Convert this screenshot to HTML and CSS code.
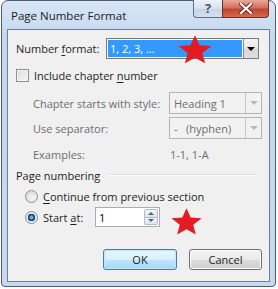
FILE: index.html
```html
<!DOCTYPE html>
<html lang="en">
<head>
  <meta charset="UTF-8">
  <meta name="viewport" content="width=device-width, initial-scale=1.0">
  <title>Page Number Format</title>
  <link rel="stylesheet" href="styles.css">
</head>
<body>
  <div class="window">

    <!-- Title bar -->
    <div class="titlebar">
      <span class="title">Page Number Format</span>
      <div class="caption-btns">
        <div class="cap-btn cap-help">?</div>
        <div class="cap-btn cap-close">
          <svg width="14" height="11" viewBox="0 0 14 11">
            <path d="M2 1 L12 10 M12 1 L2 10" stroke="#5a2a22" stroke-width="4" stroke-linecap="square"/>
            <path d="M2 1 L12 10 M12 1 L2 10" stroke="#ffffff" stroke-width="2.2" stroke-linecap="square"/>
          </svg>
        </div>
      </div>
    </div>

    <!-- Dialog body -->
    <div class="content">
      <div class="row row-format">
        <span class="label">Number <u>f</u>ormat:</span>
        <div class="combo combo-main">
          <span class="combo-value selected">1, 2, 3, …</span>
          <span class="combo-arrow"><i class="tri"></i></span>
        </div>
      </div>

      <div class="row row-check">
        <span class="checkbox"></span>
        <span>Include chapter <u>n</u>umber</span>
      </div>

      <div class="chapter-grid disabled">
        <span class="label">Chapter starts with style:</span>
        <div class="combo combo-off">
          <span class="combo-value">Heading 1</span>
          <span class="combo-arrow"><i class="tri"></i></span>
        </div>
        <span class="label">Use separator:</span>
        <div class="combo combo-off">
          <span class="combo-value">-&nbsp;&nbsp;&nbsp;(hyphen)</span>
          <span class="combo-arrow"><i class="tri"></i></span>
        </div>
        <span class="label">Examples:</span>
        <span class="examples">1-1, 1-A</span>
      </div>

      <div class="row row-group">
        <span>Page numbering</span>
        <span class="group-line"></span>
      </div>

      <div class="row row-radio">
        <span class="radio"></span>
        <span><u>C</u>ontinue from previous section</span>
      </div>

      <div class="row row-radio row-start">
        <span class="radio checked"></span>
        <span class="start-label">Start <u>a</u>t:</span>
        <div class="spin">
          <span class="spin-value">1</span>
          <span class="spin-btns">
            <span class="spin-up"><i class="tri-up"></i></span>
            <span class="spin-down"><i class="tri-down"></i></span>
          </span>
        </div>
      </div>

      <div class="buttons">
        <button class="btn btn-default">OK</button>
        <button class="btn">Cancel</button>
      </div>

      <!-- red markers drawn over the dialog -->
      <svg class="star star-one" viewBox="0 0 100 96" preserveAspectRatio="none">
        <polygon points="50,4 62.7,34.5 95.7,37.2 70.5,58.7 78.2,90.8 50,73.6 21.8,90.8 29.5,58.7 4.3,37.2 37.3,34.5" fill="#e31b23"/>
      </svg>
      <svg class="star star-two" viewBox="0 0 100 96" preserveAspectRatio="none">
        <polygon points="50,4 62.7,34.5 95.7,37.2 70.5,58.7 78.2,90.8 50,73.6 21.8,90.8 29.5,58.7 4.3,37.2 37.3,34.5" fill="#e31b23"/>
      </svg>
    </div>
  </div>
</body>
</html>
```

FILE: styles.css
```css
body {
  margin: 0;
  background: #ffffff;
  font-family: "Open Sans", "Noto Sans", sans-serif;
  font-size: 11px;
  color: #1e1e1e;
  white-space: nowrap;
}

.window {
  margin-left: 1px;
  width: 273px;
  height: 285px;
  border: 1px solid #4d5d73;
  border-radius: 7px 7px 4px 4px;
  background: linear-gradient(#d8e6f6, #c3d7ee 40px, #c6d9ef);
  display: flex;
  flex-direction: column;
}

/* title bar */
.titlebar {
  height: 28px;
  display: flex;
  justify-content: space-between;
  align-items: flex-start;
}

.title {
  margin: 7px 0 0 9px;
  font-size: 11.5px;
  color: #1b1b1b;
}

.caption-btns {
  display: flex;
  margin-right: 6px;
  margin-top: -1px;
}

.cap-btn {
  height: 17px;
  border: 1px solid #5f6f86;
  border-top: none;
  display: flex;
  justify-content: center;
  align-items: center;
}

.cap-help {
  width: 28px;
  border-right: none;
  border-radius: 0 0 0 4px;
  background: linear-gradient(#eef3f9, #d7e1ee 50%, #c5d3e5 51%, #d6e1ee);
  color: #4a5566;
  font-size: 13px;
  font-weight: bold;
  line-height: 1;
}

.cap-close {
  width: 45px;
  border-color: #6e3129;
  border-radius: 0 0 4px 0;
  background: linear-gradient(#e9a899, #d2715f 45%, #c3432e 55%, #d26a4d);
}

/* dialog body */
.content {
  position: relative;
  margin: 0 5px;
  border: 1px solid #6f7f95;
  background: #f0f0f0;
  padding: 8px 7px 0 8px;
  box-sizing: border-box;
  height: 253px;
}

.row {
  display: flex;
  align-items: center;
}

u {
  text-decoration-thickness: 1px;
  text-underline-offset: 2px;
}

.row-format {
  height: 21px;
}

.row-format .label {
  width: 90px;
}

.combo {
  box-sizing: border-box;
  display: flex;
  align-items: stretch;
  border: 1px solid #7a7a7a;
  background: #ffffff;
}

.combo-main {
  width: 153px;
  height: 21px;
  padding: 1px;
}

.combo-value {
  flex: 1;
  display: flex;
  align-items: center;
  padding-left: 3px;
}

.combo-value.selected {
  background: #3399ff;
  color: #ffffff;
  padding-left: 2px;
}

.combo-arrow {
  width: 14px;
  display: flex;
  justify-content: center;
  align-items: center;
  border-left: 1px solid #8a8a8a;
  background: linear-gradient(#f4f4f4, #e6e6e6 50%, #d6d6d6 51%, #dedede);
}

.combo-main .combo-arrow {
  margin: -1px -1px -1px 1px;
}

.tri {
  width: 0;
  height: 0;
  border-left: 4px solid transparent;
  border-right: 4px solid transparent;
  border-top: 4px solid #000000;
}

.row-check {
  height: 18px;
  margin-top: 7px;
}

.checkbox {
  width: 11px;
  height: 11px;
  margin-right: 5px;
  border: 1px solid #8e8f8f;
  background: linear-gradient(135deg, #dcdcdc, #f6f6f6);
  box-shadow: inset 0 0 0 1px #f4f4f4;
}

.chapter-grid {
  display: grid;
  grid-template-columns: 136px 93px;
  grid-template-rows: 22px 22px 18px;
  row-gap: 3px;
  align-items: center;
  margin-top: 8px;
  padding-left: 17px;
  color: #6d6d6d;
}

.chapter-grid .label:nth-of-type(3) {
  margin-top: 6px;
}

.combo-off {
  height: 22px;
  border-color: #b4b4b4;
  background: #f2f2f2;
}

.combo-off .combo-value {
  padding-left: 4px;
}

.combo-off .combo-arrow {
  width: 15px;
  border-left: 1px solid #c6c6c6;
  background: #f2f2f2;
}

.combo-off .tri {
  border-top-color: #b8b8b8;
}

.examples {
  margin-top: 6px;
  padding-left: 1px;
}

.row-group {
  height: 18px;
  margin-top: 6px;
}

.group-line {
  flex: 1;
  margin-left: 9px;
  margin-right: 5px;
  height: 0;
  border-top: 1px solid #d5dfe5;
  border-bottom: 1px solid #ffffff;
}

.row-radio {
  height: 18px;
  margin-top: 3px;
}

.radio {
  width: 11px;
  height: 11px;
  margin-left: 9px;
  margin-right: 5px;
  border-radius: 50%;
  border: 1px solid #8e8f8f;
  background: radial-gradient(circle at 60% 65%, #f4f4f4, #d4d4d4);
}

.radio.checked {
  background: radial-gradient(circle at 50% 50%, #66b8e6 0 1px, #1c5a92 2.5px, #0e3866 3.5px, #e8e8e8 4px);
}

.row-start {
  height: 20px;
  margin-top: 2px;
}

.start-label {
  width: 52px;
}

.spin {
  box-sizing: border-box;
  width: 65px;
  height: 20px;
  display: flex;
  border: 1px solid #abadb3;
  background: #ffffff;
}

.spin-value {
  flex: 1;
  display: flex;
  align-items: center;
  padding-left: 3px;
  color: #000000;
}

.spin-btns {
  width: 14px;
  display: flex;
  flex-direction: column;
  padding: 1px 1px 1px 0;
}

.spin-up,
.spin-down {
  flex: 1;
  display: flex;
  justify-content: center;
  align-items: center;
  border: 1px solid #b2bcc8;
  background: linear-gradient(#f2f5f8, #dde4ec);
}

.spin-up {
  border-radius: 2px 2px 0 0;
}

.spin-down {
  border-top: none;
  border-radius: 0 0 2px 2px;
}

.tri-up,
.tri-down {
  width: 0;
  height: 0;
  border-left: 3px solid transparent;
  border-right: 3px solid transparent;
}

.tri-up {
  border-bottom: 3px solid #4c607a;
}

.tri-down {
  border-top: 3px solid #4c607a;
}

.buttons {
  display: flex;
  justify-content: flex-end;
  gap: 12px;
  margin-top: 22px;
}

.btn {
  width: 73px;
  height: 21px;
  padding: 0;
  border: 1px solid #707070;
  border-radius: 3px;
  background: linear-gradient(#f2f2f2, #ebebeb 50%, #dddddd 51%, #cfcfcf);
  box-shadow: inset 0 0 0 1px #fcfcfc;
  font-family: "Open Sans", "Noto Sans", sans-serif;
  font-size: 11px;
  color: #1e1e1e;
}

.btn-default {
  width: 74px;
  border-color: #3c7fb1;
  box-shadow: inset 0 0 0 1px #bde6fd;
  background: linear-gradient(#eaf6fd, #d9f0fc 50%, #bee6fd 51%, #a7d9f5);
}

.star {
  position: absolute;
}

.star-one {
  left: 169px;
  top: 4px;
  width: 36px;
  height: 31px;
}

.star-two {
  left: 162px;
  top: 177px;
  width: 33px;
  height: 29px;
}
```
